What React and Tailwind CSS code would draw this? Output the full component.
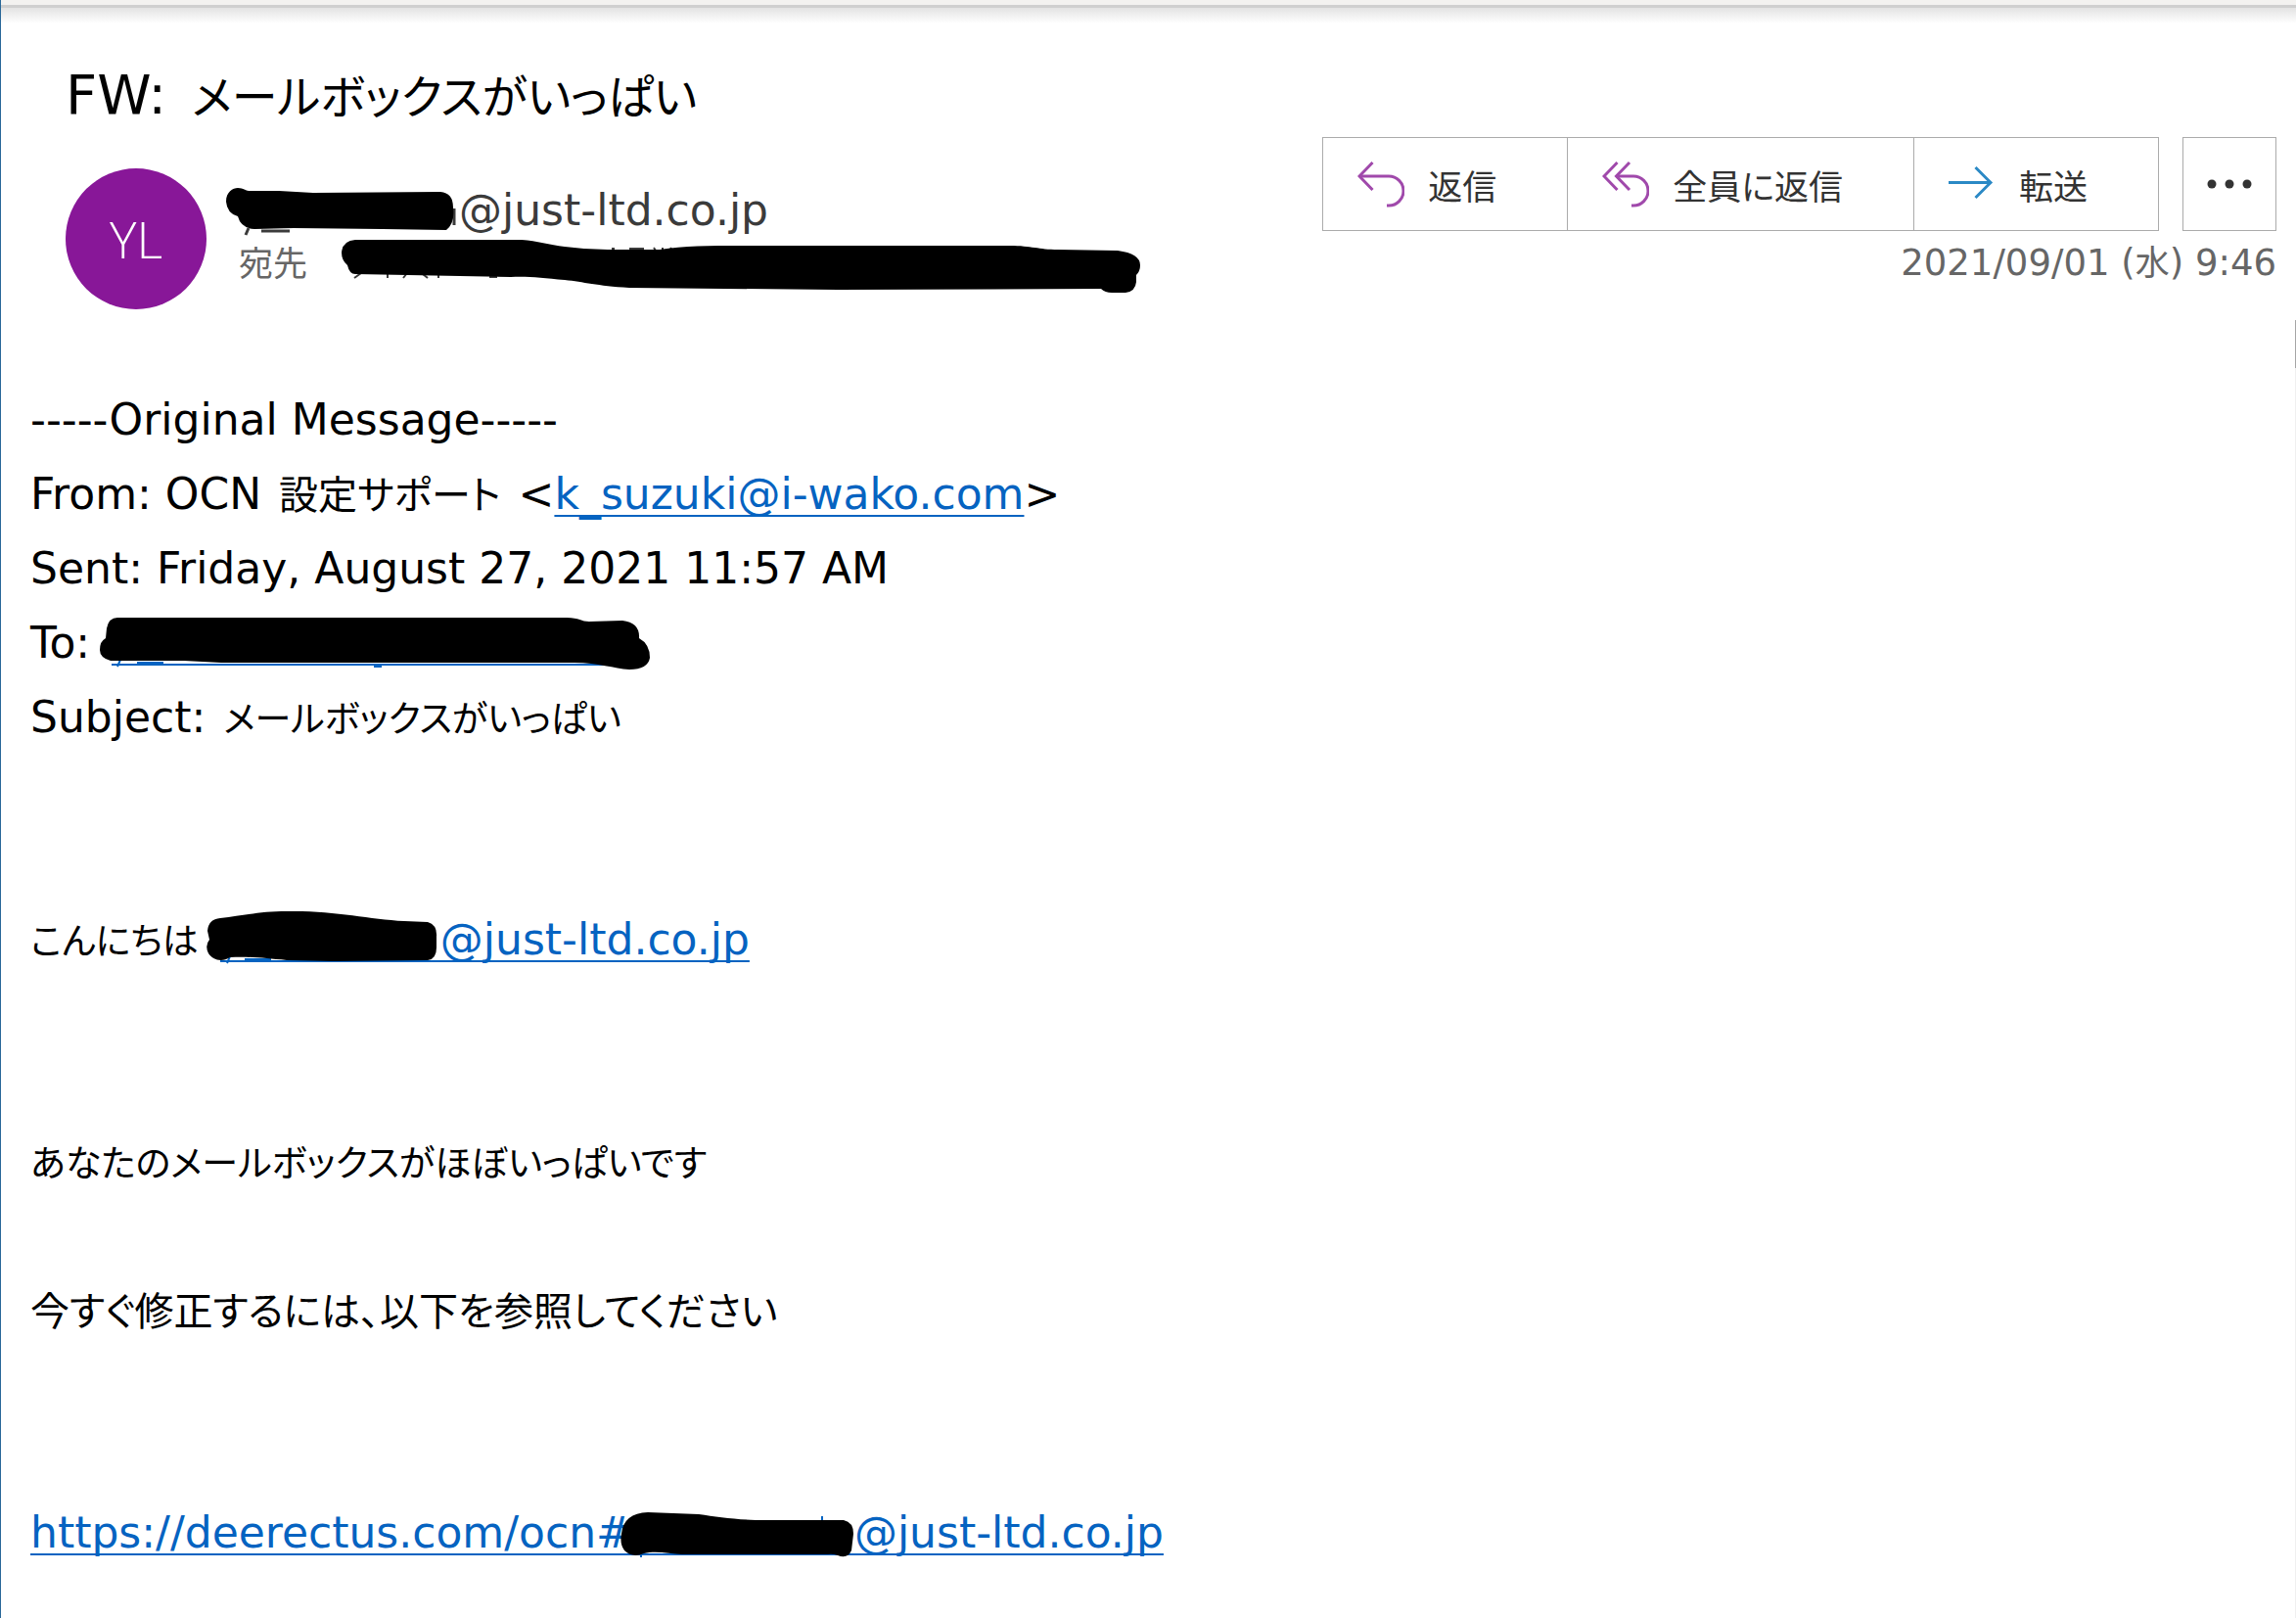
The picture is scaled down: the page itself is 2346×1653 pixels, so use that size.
import clsx from "clsx";

const replyAddress = "@just-ltd.co.jp";

// Japanese text, set with proportional kana
function Ja({ className, children }) {
  return (
    <span
      lang="ja"
      className={clsx(
        "font-['Noto_Sans_CJK_JP',sans-serif] leading-none [font-feature-settings:'palt']",
        className
      )}
    >
      {children}
    </span>
  );
}

// Black marker stroke. y = 0 is the baseline of the line it sits on
function Marker({ width, path, className, children }) {
  return (
    <svg
      width={width}
      height="28"
      viewBox={`0 -28 ${width} 28`}
      className={clsx("inline-block overflow-visible align-baseline", className)}
      aria-hidden="true"
    >
      {children}
      <path d={path} fill="#000" />
    </svg>
  );
}

function Line({ children }) {
  return <p className="h-[76px] whitespace-pre">{children}</p>;
}

function MailLink({ href, children }) {
  return (
    <a
      href={href}
      className="text-[#0563c1] underline decoration-2 underline-offset-[6px] [text-decoration-skip-ink:none]"
    >
      {children}
    </a>
  );
}

function ActionButton({ icon, label, className }) {
  return (
    <button
      type="button"
      className={clsx(
        "flex h-24 items-center gap-6 border border-[#ababab] pl-[35px] pr-[72px] text-[#333] hover:bg-gray-100",
        className
      )}
    >
      {icon}
      <Ja className="text-[35px]">{label}</Ja>
    </button>
  );
}

function ReplyIcon() {
  return (
    <svg width="48" height="48" viewBox="0 0 48 48" fill="none" stroke="#a049ab" strokeWidth="3">
      <path d="M15.5 2 L2 16 L15.5 30" />
      <path d="M2 16 H32 A14.5 14.5 0 0 1 32 46 H30" />
    </svg>
  );
}

function ReplyAllIcon() {
  return (
    <svg width="48" height="48" viewBox="0 0 48 48" fill="none" stroke="#a049ab" strokeWidth="3">
      <path d="M15.5 2 L2 16 L15.5 30" />
      <path d="M28 2 L14.5 16 L28 30" />
      <path d="M14.5 16 H32 A14.5 14.5 0 0 1 32 46 H30" />
    </svg>
  );
}

function ForwardIcon() {
  return (
    <svg width="48" height="48" viewBox="0 0 48 48" fill="none" stroke="#2b89c5" strokeWidth="3">
      <path d="M0 22.5 H43" />
      <path d="M27.5 7 L43 22.5 L27.5 38" />
    </svg>
  );
}

function Header() {
  return (
    <header className="flex justify-between bg-[linear-gradient(to_bottom,#e3e3e3,#fff_16px)] pt-[49px] pr-5 pb-[11px] pl-[66px]">
      <div>
        <h1 className="text-[56px] leading-[80px] whitespace-pre text-black">
          FW: <Ja className="ml-2 text-[47px]">メールボックスがいっぱい</Ja>
        </h1>

        {/* Sender */}
        <div className="mt-[35px] flex">
          <div className="flex size-36 shrink-0 items-center justify-center rounded-full bg-[#881798] font-['Open_Sans',sans-serif] text-[52px] font-light text-white">
            YL
          </div>
          <div className="ml-5 pt-[13px]">
            <p className="h-[60px] text-[44px] leading-[60px] whitespace-pre text-[#3b3b3b]">
              <Marker
                width={238}
                path="M0 -24 C0 -34 7 -38 12 -38 C18 -38 20 -35 23 -35 L54 -35 L89 -33 L219 -34 Q232 -33 232 -18 Q234 -2 225 5 L160 4 L69 3 L29 4 Q15 3 12 -9 Q1 -12 0 -24 Z"
              >
                <path d="M20 10 L23 3 M36 6 H65 M233 -17 V0" stroke="#3b3b3b" strokeWidth="3" />
              </Marker>
              {replyAddress}
            </p>
            <p className="h-[50px] pl-[13px] text-[36px] leading-[50px] whitespace-pre text-[#666]">
              <Ja className="text-[35px]">宛先</Ja>
              <Marker
                width={817}
                className="ml-[35px]"
                path="M0 -24 Q1 -36 14 -37 L184 -37 C200 -36 212 -32 228 -30 Q250 -27 272 -27 L325 -27 C350 -31 375 -31 409 -31 L683 -31 C705 -31 712 -27 732 -27 L793 -26 Q816 -23 816 -11 Q816 -5 812 -1 L812 6 Q811 16 801 17 L787 17 Q780 17 776 13 L507 14 L294 12 C260 10 248 6 228 4 C205 2 190 0 173 1 L14 -2 Q8 -2 6 -11 Q0 -16 0 -24 Z"
              >
                <path
                  d="M13 2 L20 -3 M47 -3 V2 M63 2 L67 -3 M83 -2 L88 2 M99 -3 V2 M151 1 L159 1 M276 -28 H279 M294 -28 H309 M319 -29 L321 -26 M328 -29 V-26 M337 -29 L335 -26"
                  stroke="#3b3b3b"
                  strokeWidth="2"
                />
              </Marker>
            </p>
          </div>
        </div>
      </div>

      {/* Actions */}
      <div className="mt-[83px] flex shrink-0 flex-col items-end">
        <div className="flex">
          <ActionButton icon={<ReplyIcon />} label="返信" />
          <ActionButton icon={<ReplyAllIcon />} label="全員に返信" className="-ml-px" />
          <ActionButton icon={<ForwardIcon />} label="転送" className="-ml-px" />
          <button
            type="button"
            aria-label="その他"
            className="ml-6 flex size-24 items-center justify-center border border-[#ababab] hover:bg-gray-100"
          >
            <svg width="48" height="10" viewBox="0 0 48 10" fill="#333">
              <circle cx="6" cy="5" r="4.5" />
              <circle cx="24" cy="5" r="4.5" />
              <circle cx="42" cy="5" r="4.5" />
            </svg>
          </button>
        </div>
        <p className="mt-2 h-[50px] text-[37px] leading-[50px] whitespace-pre text-[#666]">
          2021/09/01 (<Ja className="text-[35px]">水</Ja>) 9:46
        </p>
      </div>
    </header>
  );
}

function Body() {
  return (
    <main className="flex-1 pt-16 pl-[30px] text-[44px] leading-[76px] text-black">
      <Line>-----Original Message-----</Line>
      <Line>
        From: OCN <Ja className="mx-1 text-[40px]">設定サポート</Ja> &lt;
        <MailLink href="mailto:k_suzuki@i-wako.com">k_suzuki@i-wako.com</MailLink>&gt;
      </Line>
      <Line>Sent: Friday, August 27, 2021 11:57 AM</Line>
      <Line>
        To:
        <Marker
          width={562}
          className="ml-2.5"
          path="M7 -30 Q9 -41 18 -41 L477 -41 C490 -41 492 -37 500 -37 L534 -38 Q552 -36 551 -20 Q562 -14 562 0 Q560 12 541 12 C525 11 510 5 485 5 L124 5 L86 3 L11 3 Q0 0 0 -8 Q0 -17 6 -20 Z"
        >
          <path d="M12 7 H524 M18 9 L21 2 M38 5 H65 M280 9 H288" stroke="#0563c1" strokeWidth="2" />
        </Marker>
      </Line>
      <Line>
        Subject: <Ja className="mx-1 text-[37px]">メールボックスがいっぱい</Ja>
      </Line>

      <div className="mt-[151px]">
        <Line>
          <Ja className="text-[37px]">こんにちは</Ja>
          <MailLink href="mailto:y_@just-ltd.co.jp">
            <Marker
              width={239}
              className="ml-2"
              path="M1 -24 Q2 -36 14 -37 C40 -40 55 -44 82 -44 C130 -45 165 -36 202 -34 L226 -33 Q236 -30 235 -18 L235 -7 Q235 5 226 6 L129 7 L82 6 C60 4 45 2 24 3 C15 9 6 5 2 -1 Q-2 -9 3 -15 Z"
            >
              <path d="M14 7 H239 M21 9 L24 2 M39 5 H66" stroke="#0563c1" strokeWidth="2" />
            </Marker>
            {replyAddress}
          </MailLink>
        </Line>
      </div>

      <div className="mt-[151px] space-y-[76px]">
        <Line>
          <Ja className="text-[37px]">あなたのメールボックスがほぼいっぱいです</Ja>
        </Line>
        <Line>
          <Ja className="text-[40px]">今すぐ修正するには、以下を参照してください</Ja>
        </Line>
      </div>

      <div className="mt-[151px]">
        <Line>
          <MailLink href="https://deerectus.com/ocn">
            https://deerectus.com/ocn#
            <Marker
              width={239}
              className="-ml-3"
              path="M1 -14 Q3 -35 28 -36 L80 -34 C100 -31 120 -28 149 -28 L228 -28 Q238 -26 238 -14 L236 3 Q232 12 222 8 Q216 6 212 7 L63 7 C50 6 35 3 24 6 Q12 11 4 3 Q-1 -4 1 -14 Z"
            >
              <path d="M0 7 H239 M21 5 V10 M206 -32 V-26" stroke="#0563c1" strokeWidth="2" />
            </Marker>
            {replyAddress}
          </MailLink>
        </Line>
      </div>
    </main>
  );
}

function App() {
  return (
    <div className="flex min-h-screen flex-col border-l border-[#2a6899] bg-white font-['DejaVu_Sans','Noto_Sans_CJK_JP',sans-serif]">
      <div className="h-2 border-b-[3px] border-[#cfcfcf] bg-[#f3f2f0]" />
      <Header />
      <div className="flex flex-1">
        <Body />
        {/* Scroll bar */}
        <div className="w-px bg-[#f0f0f0]">
          <div className="h-[49px] bg-[#a6a6a6]" />
        </div>
      </div>
    </div>
  );
}

export default App;
